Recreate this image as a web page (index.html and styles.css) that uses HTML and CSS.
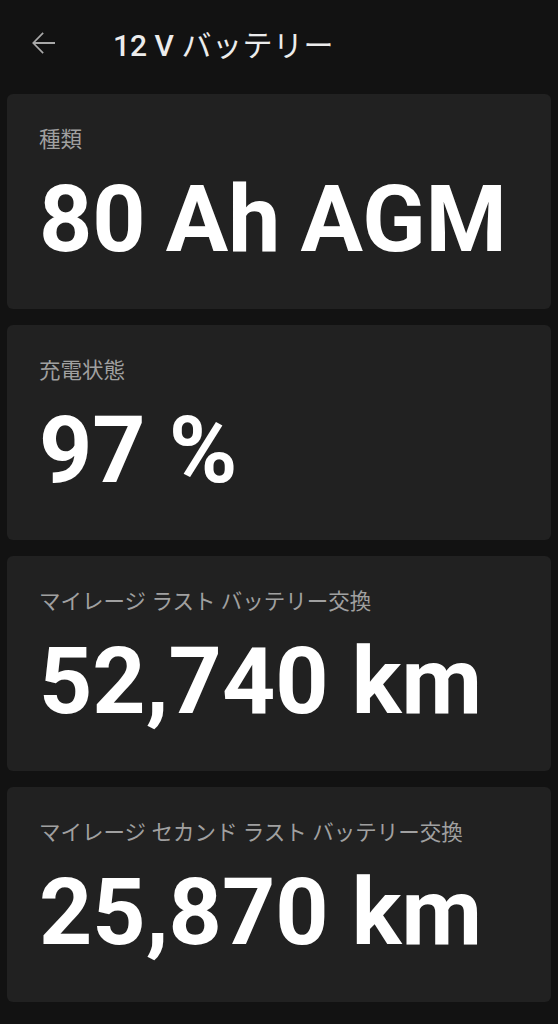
FILE: index.html
```html
<!DOCTYPE html>
<html lang="ja">
<head>
<meta charset="utf-8">
<link rel="stylesheet" href="styles.css">
</head>
<body>
<header class="bar">
  <svg class="back" viewBox="0 0 24 24" width="36" height="36"><path d="M20 11.3H6.9l5.6-5.6-.8-.8L4.7 12l7 7.1.8-.8-5.6-5.6H20z" fill="#a8a8a8"/></svg>
  <h1 class="title">12 V <span class="jp">バッテリー</span></h1>
</header>
<main class="list">
  <section class="card"><div class="label">種類</div><div class="value tight">80 Ah AGM</div></section>
  <section class="card"><div class="label">充電状態</div><div class="value">97 %</div></section>
  <section class="card"><div class="label">マイレージ ラスト バッテリー交換</div><div class="value">52,740 km</div></section>
  <section class="card"><div class="label">マイレージ セカンド ラスト バッテリー交換</div><div class="value">25,870 km</div></section>
</main>
</body>
</html>
```
FILE: styles.css
```css
html, body { margin: 0; padding: 0; background: #121212; }
body { font-family: Roboto, "Noto Sans CJK JP", sans-serif; color: #fff; width: 558px; height: 1024px; overflow: hidden; }
.bar { height: 85px; display: flex; align-items: center; padding-left: 25px; }
.back { display: block; margin-right: 52px; }
.title { margin: 0; font-size: 30px; font-weight: 500; color: #ececec; }
.title .jp { font-weight: 400; letter-spacing: 0.5px; }
.list { display: flex; flex-direction: column; gap: 16px; padding: 9px 7px 0 7px; }
.card { background: #212121; border-radius: 6px; height: 215px; box-sizing: border-box; padding: 31px 31px 0 32px; }
.label { font-size: 21.5px; line-height: 30px; color: #a0a0a0; }
.value { margin-top: 18px; font-size: 93px; line-height: 93px; font-weight: 700; color: #fff; white-space: nowrap; }
.value.tight { word-spacing: -3px; }
```
